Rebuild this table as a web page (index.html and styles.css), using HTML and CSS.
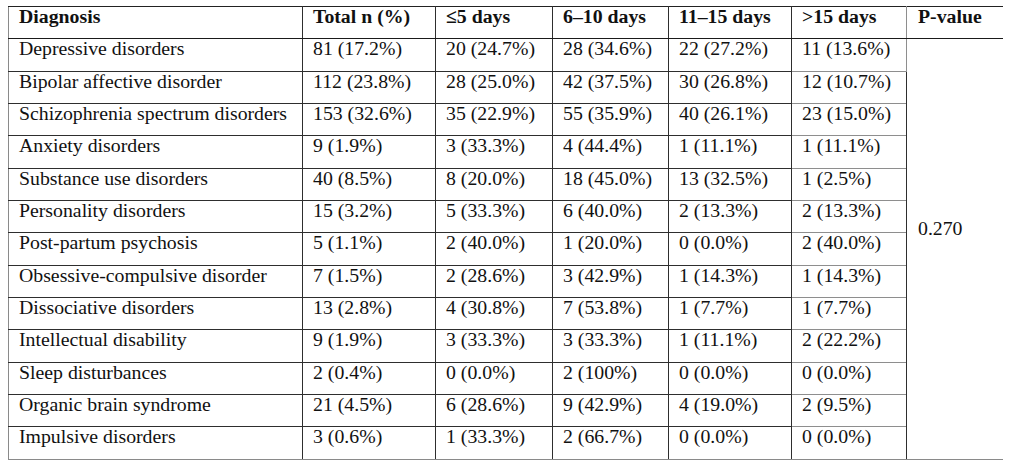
FILE: index.html
```html
<!DOCTYPE html>
<html>
<head>
<meta charset="utf-8">
<link rel="stylesheet" href="styles.css">
</head>
<body>
<table class="dx-table">
  <colgroup>
    <col class="c-diag">
    <col class="c-total">
    <col class="c-d5">
    <col class="c-d10">
    <col class="c-d15">
    <col class="c-dgt">
    <col class="c-p">
  </colgroup>
  <thead>
    <tr>
      <th>Diagnosis</th>
      <th>Total n (%)</th>
      <th>≤5 days</th>
      <th>6–10 days</th>
      <th>11–15 days</th>
      <th class="grey">&gt;15 days</th>
      <th class="pv">P-value</th>
    </tr>
  </thead>
  <tbody>
    <tr><td>Depressive disorders</td><td>81 (17.2%)</td><td>20 (24.7%)</td><td>28 (34.6%)</td><td>22 (27.2%)</td><td class="grey">11 (13.6%)</td><td class="pv pval" rowspan="13">0.270</td></tr>
    <tr><td>Bipolar affective disorder</td><td>112 (23.8%)</td><td>28 (25.0%)</td><td>42 (37.5%)</td><td>30 (26.8%)</td><td class="grey">12 (10.7%)</td></tr>
    <tr><td>Schizophrenia spectrum disorders</td><td>153 (32.6%)</td><td>35 (22.9%)</td><td>55 (35.9%)</td><td>40 (26.1%)</td><td class="grey">23 (15.0%)</td></tr>
    <tr><td>Anxiety disorders</td><td>9 (1.9%)</td><td>3 (33.3%)</td><td>4 (44.4%)</td><td>1 (11.1%)</td><td class="grey">1 (11.1%)</td></tr>
    <tr><td>Substance use disorders</td><td>40 (8.5%)</td><td>8 (20.0%)</td><td>18 (45.0%)</td><td>13 (32.5%)</td><td class="grey">1 (2.5%)</td></tr>
    <tr><td>Personality disorders</td><td>15 (3.2%)</td><td>5 (33.3%)</td><td>6 (40.0%)</td><td>2 (13.3%)</td><td class="grey">2 (13.3%)</td></tr>
    <tr><td>Post-partum psychosis</td><td>5 (1.1%)</td><td>2 (40.0%)</td><td>1 (20.0%)</td><td>0 (0.0%)</td><td class="grey">2 (40.0%)</td></tr>
    <tr><td>Obsessive-compulsive disorder</td><td>7 (1.5%)</td><td>2 (28.6%)</td><td>3 (42.9%)</td><td>1 (14.3%)</td><td class="grey">1 (14.3%)</td></tr>
    <tr><td>Dissociative disorders</td><td>13 (2.8%)</td><td>4 (30.8%)</td><td>7 (53.8%)</td><td>1 (7.7%)</td><td class="grey">1 (7.7%)</td></tr>
    <tr><td>Intellectual disability</td><td>9 (1.9%)</td><td>3 (33.3%)</td><td>3 (33.3%)</td><td>1 (11.1%)</td><td class="grey">2 (22.2%)</td></tr>
    <tr><td>Sleep disturbances</td><td>2 (0.4%)</td><td>0 (0.0%)</td><td>2 (100%)</td><td>0 (0.0%)</td><td class="grey">0 (0.0%)</td></tr>
    <tr><td>Organic brain syndrome</td><td>21 (4.5%)</td><td>6 (28.6%)</td><td>9 (42.9%)</td><td>4 (19.0%)</td><td class="grey">2 (9.5%)</td></tr>
    <tr><td>Impulsive disorders</td><td>3 (0.6%)</td><td>1 (33.3%)</td><td>2 (66.7%)</td><td>0 (0.0%)</td><td class="grey">0 (0.0%)</td></tr>
  </tbody>
</table>
</body>
</html>
```

FILE: styles.css
```css
html, body {
  background: #ffffff;
}

body {
  margin: 6px 8px;
  font-family: "Liberation Serif", "Times New Roman", serif;
  color: #111111;
}

.dx-table {
  border-collapse: collapse;
  table-layout: fixed;
  width: 995px;
  font-size: 19.8px;
  line-height: 16px;
  border: 1px solid #8a8a8a;
}

.dx-table tr {
  height: 32.35px;
}

.c-diag { width: 294px; }
.c-total { width: 133px; }
.c-d5 { width: 117px; }
.c-d10 { width: 116px; }
.c-d15 { width: 123px; }
.c-dgt { width: 115px; }
.c-p { width: 97px; }

.dx-table th,
.dx-table td {
  border: 1px solid #2e2e2e;
  padding: 1px 0 0 10px;
  vertical-align: top;
  text-align: left;
  white-space: nowrap;
  overflow: hidden;
}

.dx-table th {
  font-weight: bold;
  border-top-color: #222222;
  border-bottom-color: #1a1a1a;
}

.dx-table td:first-child,
.dx-table th:first-child {
  border-left-color: #8a8a8a;
}

.dx-table tbody tr:last-child td {
  border-bottom-color: #8a8a8a;
}

.dx-table .grey {
  border-left-color: #8e8e8e;
  border-right-color: #8e8e8e;
}

.dx-table td.grey {
  border-top-color: #8e8e8e;
  border-bottom-color: #8e8e8e;
}

.dx-table .pv {
  padding-left: 11px;
  border-right-color: #8a8a8a;
}

.dx-table td.pval {
  padding-top: 181px;
  border-bottom-color: #8a8a8a;
}
```
